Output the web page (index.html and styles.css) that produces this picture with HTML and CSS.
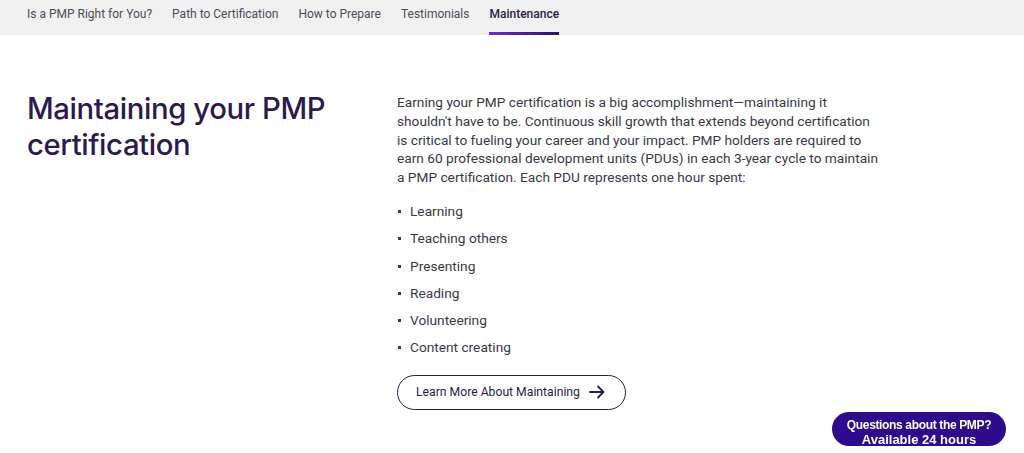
FILE: index.html
```html
<!DOCTYPE html>
<html lang="en">
<head>
<meta charset="utf-8">
<title>Maintaining your PMP certification</title>
<link rel="stylesheet" href="styles.css">
</head>
<body>
<nav class="subnav">
  <a class="nav-item" href="#">Is a PMP Right for You?</a>
  <a class="nav-item" href="#">Path to Certification</a>
  <a class="nav-item" href="#">How to Prepare</a>
  <a class="nav-item" href="#">Testimonials</a>
  <a class="nav-item active" href="#">Maintenance</a>
</nav>
<main class="section">
  <h2 class="title">Maintaining your PMP certification</h2>
  <div class="content">
    <p class="lead">Earning your PMP certification is a big accomplishment—maintaining it shouldn't have to be. Continuous skill growth that extends beyond certification is critical to fueling your career and your impact. PMP holders are required to earn 60 professional development units (PDUs) in each 3-year cycle to maintain a PMP certification. Each PDU represents one hour spent:</p>
    <ul class="list">
      <li>Learning</li>
      <li>Teaching others</li>
      <li>Presenting</li>
      <li>Reading</li>
      <li>Volunteering</li>
      <li>Content creating</li>
    </ul>
    <a class="btn" href="#">Learn More About Maintaining
      <svg class="arrow" width="16" height="14" viewBox="0 0 16 14" fill="none" stroke="#2b1b4d" stroke-width="1.8" stroke-linecap="round" stroke-linejoin="round"><path d="M1 7h13.5M9 1.5L14.5 7 9 12.5"/></svg>
    </a>
  </div>
</main>
<a class="chat" href="#"><span class="chat-q">Questions about the PMP?</span><span class="chat-strong">Available 24 hours</span></a>
</body>
</html>
```
FILE: styles.css
```css
* { box-sizing: border-box; }
html, body { margin: 0; padding: 0; background: #fff; }
body { font-family: Roboto, "Liberation Sans", Arial, sans-serif; color: #3a3848; overflow: hidden; height: 453px; }

.subnav {
  display: flex;
  gap: 20px;
  height: 35px;
  padding-left: 27px;
  background: #f1f1f1;
  align-items: stretch;
}
.nav-item {
  display: flex;
  align-items: center;
  padding-bottom: 4px;
  font-size: 12px;
  color: #4e4b5a;
  text-decoration: none;
  border-bottom: 3px solid transparent;
}
.nav-item.active {
  color: #2b1b4d;
  font-weight: 500;
  border-image: linear-gradient(90deg, #6b2fd3, #2a1556) 1;
  border-bottom: 3px solid;
}

.section {
  display: flex;
  padding: 56px 0 0 27px;
}
.title {
  width: 370px;
  flex: none;
  margin: 0;
  font-family: Inter, "Noto Sans", sans-serif;
  font-weight: 500;
  font-size: 29.3px;
  line-height: 36px;
  letter-spacing: -0.4px;
  color: #2b1b4d;
}
.content { width: 485px; padding-top: 2px; }
.lead {
  margin: 0 0 11px;
  font-size: 13.7px;
  line-height: 18.8px;
  color: #3a3848;
}
.list {
  list-style: none;
  margin: 0 0 13px;
  padding: 0;
}
.list li {
  position: relative;
  padding-left: 13px;
  font-size: 13.7px;
  line-height: 27.3px;
  color: #3a3848;
}
.list li::before {
  content: "";
  position: absolute;
  left: 1px;
  top: 12px;
  width: 3px;
  height: 3px;
  background: #3a3848;
}
.btn {
  display: inline-flex;
  align-items: center;
  gap: 9px;
  height: 35px;
  padding: 0 20px 0 18px;
  border: 1.6px solid #2b1b4d;
  border-radius: 18px;
  font-size: 12.2px;
  color: #2b1b4d;
  text-decoration: none;
}
.arrow { display: block; }

.chat {
  position: fixed;
  right: 18px;
  bottom: 7px;
  width: 174px;
  height: 34px;
  display: flex;
  flex-direction: column;
  align-items: center;
  justify-content: flex-start;
  overflow: hidden;
  background: #2e0a8c;
  border-radius: 17px;
  font-family: "Liberation Sans", Arial, sans-serif;
  font-weight: bold;
  color: #fff;
  text-decoration: none;
  padding-top: 6px;
}
.chat-q { font-size: 12px; line-height: 14px; letter-spacing: -0.35px; }
.chat-strong { font-size: 13px; line-height: 15px; }
```
